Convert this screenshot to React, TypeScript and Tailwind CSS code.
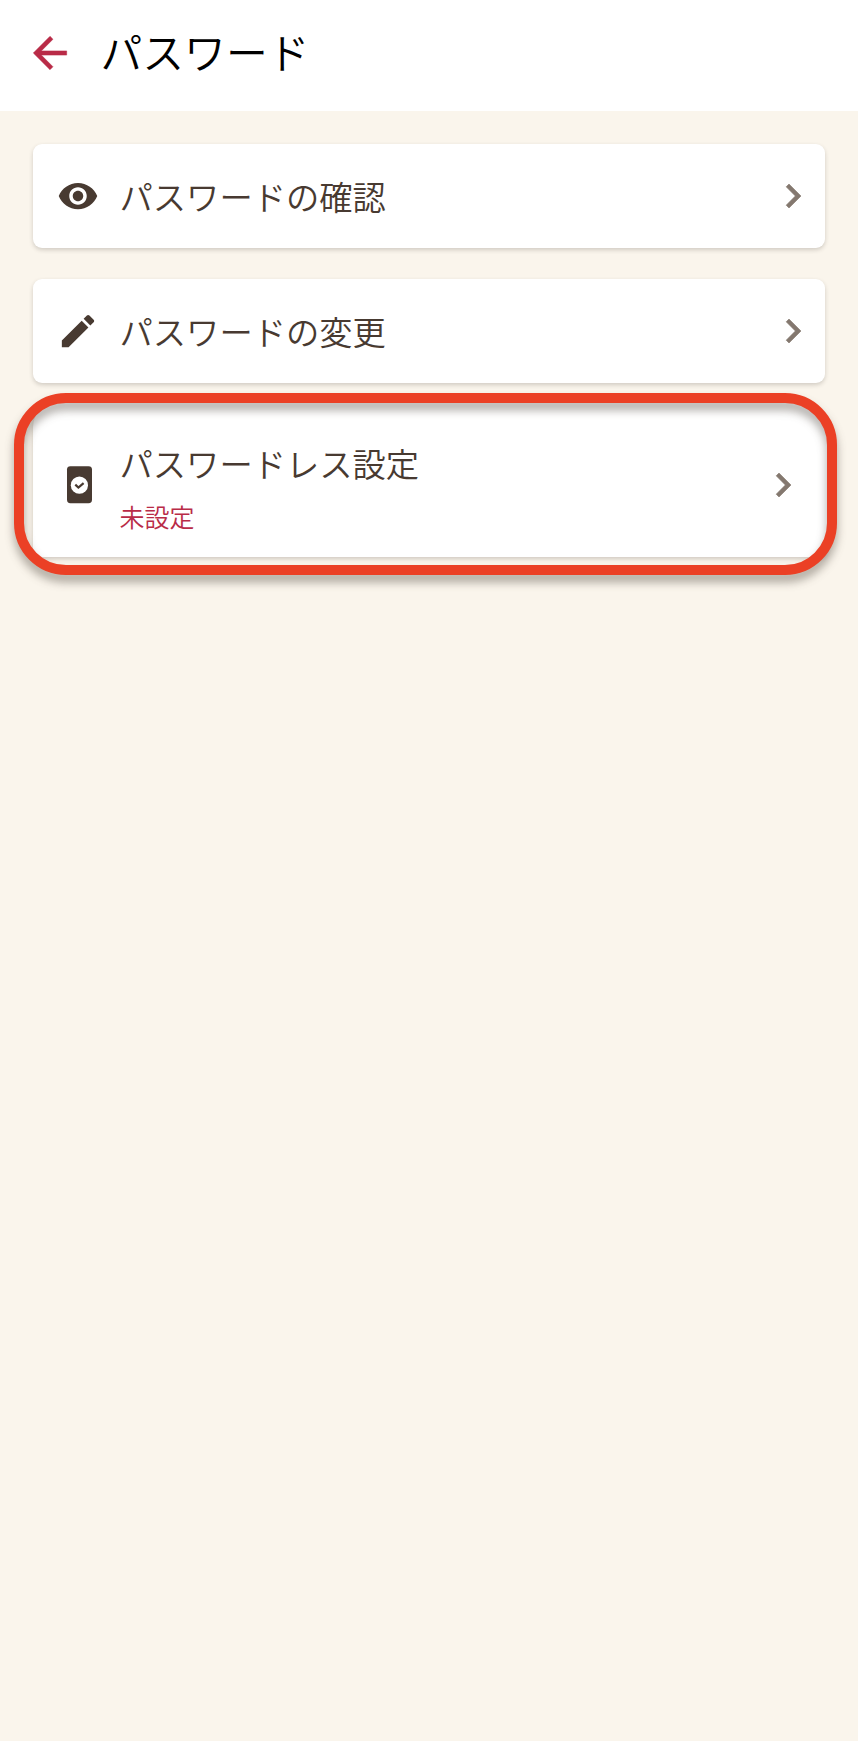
import React from 'react';

const ArrowBackIcon: React.FC = () => (
  <svg viewBox="0 0 24 24" className="relative top-[0.5px] h-[50px] w-[50px] shrink-0 fill-[#b92b47] stroke-[#b92b47] stroke-[0.25]">
    <path d="M20 11H7.83l5.59-5.59L12 4l-8 8 8 8 1.41-1.41L7.83 13H20v-2z" />
  </svg>
);

const EyeIcon: React.FC = () => (
  <svg viewBox="0 0 24 24" className="h-[42px] w-[42px] shrink-0 fill-[#483a31]">
    <path d="M12 4.5C7 4.5 2.73 7.61 1 12c1.73 4.39 6 7.5 11 7.5s9.27-3.11 11-7.5c-1.73-4.39-6-7.5-11-7.5zM12 17c-2.76 0-5-2.24-5-5s2.24-5 5-5 5 2.24 5 5-2.24 5-5 5zm0-8c-1.66 0-3 1.34-3 3s1.34 3 3 3 3-1.34 3-3-1.34-3-3-3z" />
  </svg>
);

const PencilIcon: React.FC = () => (
  <svg viewBox="0.3 0.2 23.4 23.4" className="h-[42px] w-[42px] shrink-0 fill-[#483a31]">
    <path d="M3 17.25V21h3.75L17.81 9.94l-3.75-3.75L3 17.25zM20.71 7.04c.39-.39.39-1.02 0-1.41l-2.34-2.34c-.39-.39-1.02-.39-1.41 0l-1.83 1.83 3.75 3.75 1.83-1.83z" />
  </svg>
);

const PhoneCheckIcon: React.FC = () => (
  <svg viewBox="0 0 42 42" className="h-[42px] w-[42px] shrink-0">
    <rect x="11" y="2.2" width="25" height="37" rx="3.4" fill="#483a31" />
    <circle cx="23.4" cy="21.2" r="8.6" fill="#fff" />
    <path d="M19.3 20.6l3.1 2.9 5.2-4.4" fill="none" stroke="#483a31" strokeWidth="2.2" />
  </svg>
);

const ChevronIcon: React.FC = () => (
  <svg viewBox="0 0 24 24" className="h-12 w-12 shrink-0 fill-[#84786f] stroke-[#84786f] stroke-[0.3]">
    <path d="M10 6L8.59 7.41 13.17 12l-4.58 4.59L10 18l6-6z" />
  </svg>
);

interface MenuCardProps {
  icon: React.ReactNode;
  label: string;
}

const MenuCard: React.FC<MenuCardProps> = ({ icon, label }) => (
  <button className="flex h-[104px] w-full items-center rounded-[9px] bg-white pl-[23.5px] pr-2 text-left shadow-[0_2px_4px_rgba(70,60,50,0.22)]">
    {icon}
    <span className="ml-[21px] flex-1 pb-px text-[33.3px] leading-[48px] text-[#483a31]">{label}</span>
    <ChevronIcon />
  </button>
);

const App: React.FC = () => {
  return (
    <div className="min-h-[1741px] w-full bg-[#faf5ec] font-['Noto_Sans_CJK_JP_DemiLight','Noto_Sans_CJK_JP',sans-serif] font-[350]">
      {/* Header */}
      <header className="flex h-[111px] items-center bg-white pb-[6px] pl-[25px]">
        <ArrowBackIcon />
        <h1 className="ml-[25.5px] pb-[4px] text-[41.8px] leading-[60px] text-black">パスワード</h1>
      </header>

      {/* Menu */}
      <main className="flex flex-col px-[33px] pt-[33px]">
        <MenuCard icon={<EyeIcon />} label="パスワードの確認" />
        <div className="mt-[31px]">
          <MenuCard icon={<PencilIcon />} label="パスワードの変更" />
        </div>

        <div className="relative -mr-[2px] mt-[20px]">
          <button className="flex h-[154px] w-full items-center rounded-b-[9px] rounded-t-[24px] bg-white pb-[2px] pl-[23px] pr-[20px] pt-[11px] text-left shadow-[0_2px_4px_rgba(70,60,50,0.24)]">
            <PhoneCheckIcon />
            <span className="ml-[21.5px] flex flex-1 flex-col gap-[11px] pt-[4px]">
              <span className="text-[33.3px] leading-[48px] text-[#483a31]">パスワードレス設定</span>
              <span className="text-[25px] leading-[36px] text-[#b92b47]">未設定</span>
            </span>
            <ChevronIcon />
          </button>
          {/* Highlight ring */}
          <div className="pointer-events-none absolute -bottom-[18px] -left-[19px] -right-[10px] -top-[10px] rounded-[52px] border-[10px] border-[#eb4025] drop-shadow-[0_7px_5px_rgba(60,50,40,0.42)]" />
        </div>
      </main>
    </div>
  );
};

export default App;
